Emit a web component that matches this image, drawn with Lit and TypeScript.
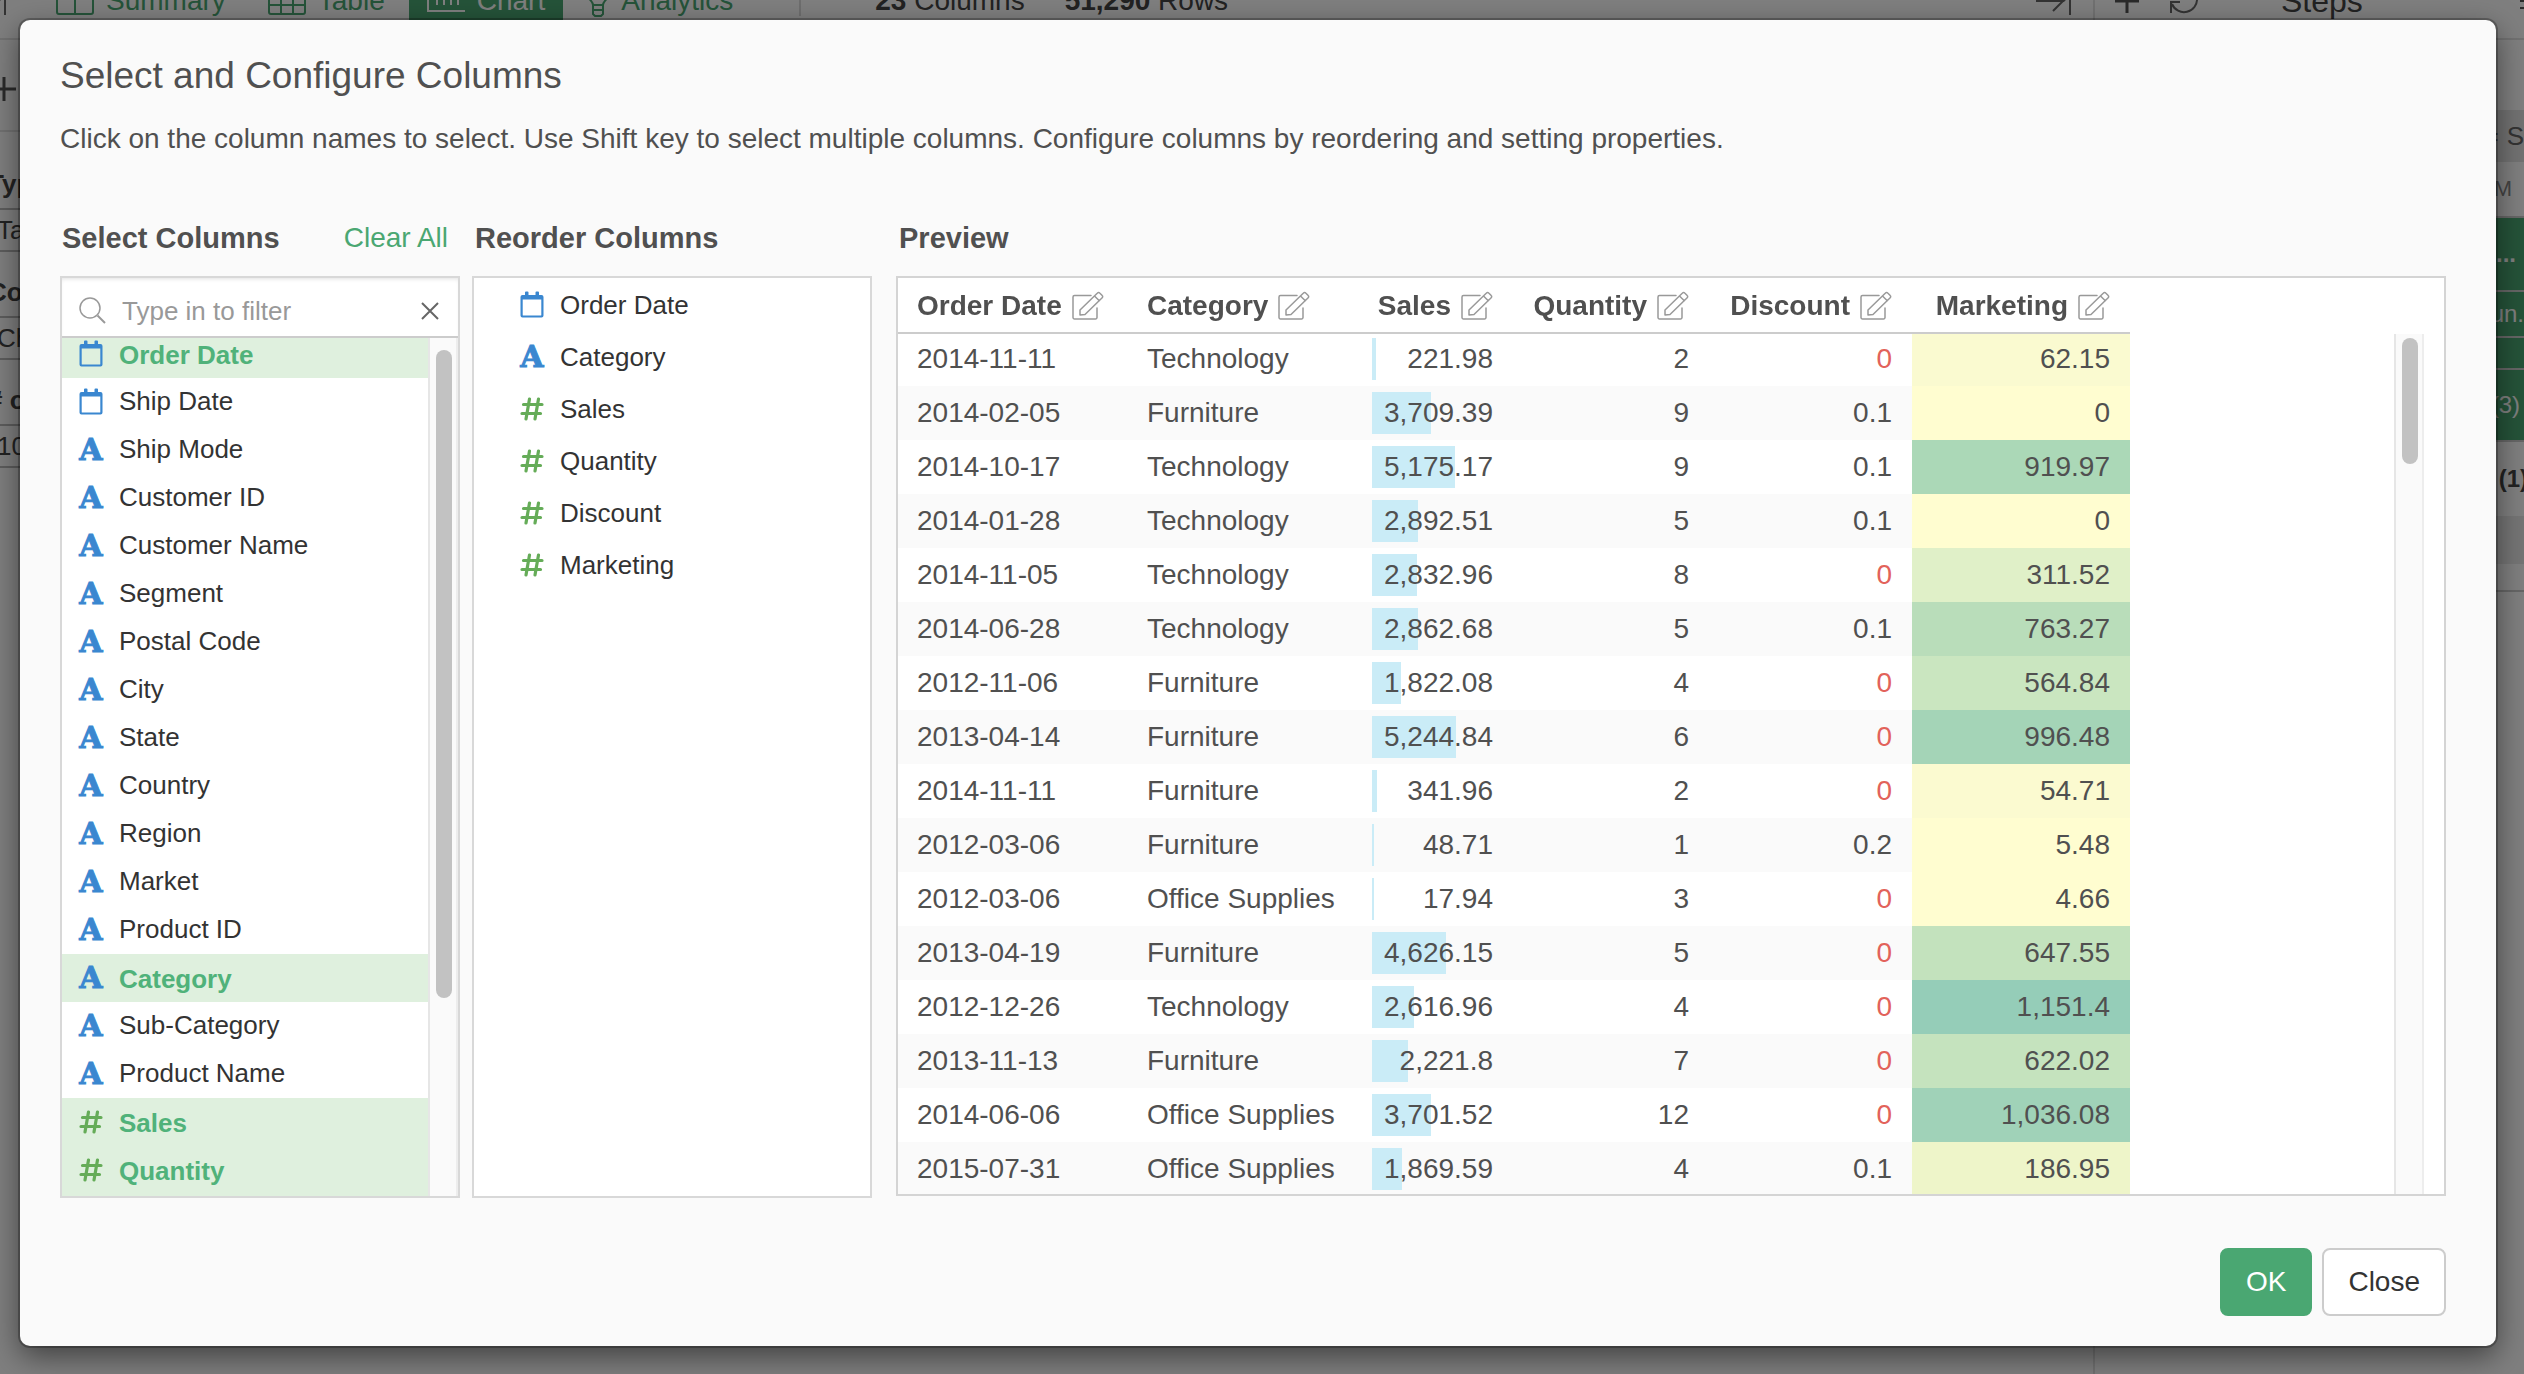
import { LitElement, html, css, nothing } from "lit";
import { customElement, property, state } from "lit/decorators.js";
import { classMap } from "lit/directives/class-map.js";
import { styleMap } from "lit/directives/style-map.js";

type Kind = "date" | "text" | "number";
interface Column {
  name: string;
  kind: Kind;
}

const COLUMNS: Column[] = [
  { name: "Order Date", kind: "date" },
  { name: "Ship Date", kind: "date" },
  { name: "Ship Mode", kind: "text" },
  { name: "Customer ID", kind: "text" },
  { name: "Customer Name", kind: "text" },
  { name: "Segment", kind: "text" },
  { name: "Postal Code", kind: "text" },
  { name: "City", kind: "text" },
  { name: "State", kind: "text" },
  { name: "Country", kind: "text" },
  { name: "Region", kind: "text" },
  { name: "Market", kind: "text" },
  { name: "Product ID", kind: "text" },
  { name: "Category", kind: "text" },
  { name: "Sub-Category", kind: "text" },
  { name: "Product Name", kind: "text" },
  { name: "Sales", kind: "number" },
  { name: "Quantity", kind: "number" },
  { name: "Discount", kind: "number" },
];

const REORDER: Column[] = [
  { name: "Order Date", kind: "date" },
  { name: "Category", kind: "text" },
  { name: "Sales", kind: "number" },
  { name: "Quantity", kind: "number" },
  { name: "Discount", kind: "number" },
  { name: "Marketing", kind: "number" },
];

type Row = [string, string, number, number, number, number];
const ROWS: Row[] = [
  ["2014-11-11", "Technology", 221.98, 2, 0, 62.15],
  ["2014-02-05", "Furniture", 3709.39, 9, 0.1, 0],
  ["2014-10-17", "Technology", 5175.17, 9, 0.1, 919.97],
  ["2014-01-28", "Technology", 2892.51, 5, 0.1, 0],
  ["2014-11-05", "Technology", 2832.96, 8, 0, 311.52],
  ["2014-06-28", "Technology", 2862.68, 5, 0.1, 763.27],
  ["2012-11-06", "Furniture", 1822.08, 4, 0, 564.84],
  ["2013-04-14", "Furniture", 5244.84, 6, 0, 996.48],
  ["2014-11-11", "Furniture", 341.96, 2, 0, 54.71],
  ["2012-03-06", "Furniture", 48.71, 1, 0.2, 5.48],
  ["2012-03-06", "Office Supplies", 17.94, 3, 0, 4.66],
  ["2013-04-19", "Furniture", 4626.15, 5, 0, 647.55],
  ["2012-12-26", "Technology", 2616.96, 4, 0, 1151.4],
  ["2013-11-13", "Furniture", 2221.8, 7, 0, 622.02],
  ["2014-06-06", "Office Supplies", 3701.52, 12, 0, 1036.08],
  ["2015-07-31", "Office Supplies", 1869.59, 4, 0.1, 186.95],
];

const SALES_SCALE = 7560;

/* Colour scale of the Marketing column, from pale yellow to teal. */
const SCALE: [number, number[]][] = [
  [0, [255, 253, 208]],
  [62, [250, 250, 208]],
  [187, [238, 245, 201]],
  [312, [224, 240, 200]],
  [565, [202, 230, 192]],
  [763, [185, 221, 186]],
  [920, [171, 216, 183]],
  [1152, [149, 205, 184]],
];

function heat(value: number): string {
  for (let i = 1; i < SCALE.length; i++) {
    const [lo, a] = SCALE[i - 1];
    const [hi, b] = SCALE[i];
    if (value <= hi) {
      const t = (value - lo) / (hi - lo);
      return `rgb(${a.map((c, k) => Math.round(c + (b[k] - c) * t)).join(",")})`;
    }
  }
  return `rgb(${SCALE[SCALE.length - 1][1].join(",")})`;
}

const fmt = (n: number) => n.toLocaleString("en-US", { maximumFractionDigits: 2 });

@customElement("type-icon")
export class TypeIcon extends LitElement {
  @property() kind: Kind = "text";

  static styles = css`
    :host {
      display: flex;
      align-items: center;
      justify-content: center;
      flex: none;
      width: 24px;
      height: 28px;
      color: #3a87d0;
    }
    svg {
      display: block;
    }
    .letter {
      font: bold 30px/28px "DejaVu Serif", serif;
      -webkit-text-stroke: 1px currentColor;
    }
    .hash {
      color: #65ac58;
    }
  `;

  render() {
    if (this.kind === "text") return html`<span class="letter" aria-hidden="true">A</span>`;
    if (this.kind === "number") {
      return html`<svg class="hash" width="24" height="24" viewBox="0 0 24 24" fill="none"
        stroke="currentColor" stroke-width="3.200" stroke-linecap="round" aria-hidden="true">
        <path d="M3.5 7.5H22M2 16.5H20.500M9.500 2L6 22M18.500 2L15 22" />
      </svg>`;
    }
    return html`<svg width="24" height="28" viewBox="0 0 24 28" aria-hidden="true">
      <path fill="currentColor" fill-rule="evenodd"
        d="M5 4V1.500a1 1 0 0 1 1-1h1.500a1 1 0 0 1 1 1V4h7V1.500a1 1 0 0 1 1-1H18a1 1 0 0 1 1 1V4h2.500A2 2 0 0 1 23.500 6v18.500a2 2 0 0 1-2 2h-19a2 2 0 0 1-2-2V6a2 2 0 0 1 2-2ZM2.700 8.500V24a.5.500 0 0 0 .5.500h17.600a.5.500 0 0 0 .5-.5V8.500Z" />
    </svg>`;
  }
}

const editIcon = html`<svg width="32" height="30" viewBox="0 0 32 30" fill="none" stroke="#999"
  stroke-width="1.500" stroke-linejoin="round" stroke-linecap="round" aria-hidden="true">
  <path d="M19 4.500H2.500A1.500 1.500 0 0 0 1 6V26.500A1.500 1.500 0 0 0 2.500 28H23.500A1.500 1.500 0 0 0 25 26.500V17" />
  <path d="M8 24V19L25.500 2a1.500 1.500 0 0 1 2.200 0L30.200 4.500a1.500 1.500 0 0 1 0 2.200L13 23.500ZM22.500 5L27.300 9.700" />
</svg>`;

@customElement("column-list")
export class ColumnList extends LitElement {
  @state() private selected = new Set(["Order Date", "Category", "Sales", "Quantity", "Discount"]);

  static styles = css`
    :host {
      display: flex;
      flex-direction: column;
      box-sizing: border-box;
      min-height: 0;
      border: 2px solid #d8d8d8;
      background: #fff;
      color: #333;
      font-size: 26px;
    }
    .filter {
      display: flex;
      align-items: center;
      flex: none;
      height: 60px;
      box-sizing: border-box;
      padding: 8px 18px 0 17px;
      border-bottom: 2px solid #ccc;
      box-shadow: inset 0 3px 4px -2px rgba(0, 0, 0, 0.12);
    }
    .filter svg {
      display: block;
      flex: none;
    }
    .filter label {
      display: flex;
    }
    .filter input {
      flex: 1;
      min-width: 0;
      height: 44px;
      padding: 0 0 0 15px;
      border: 0;
      outline: 0;
      background: none;
      font: inherit;
      color: #333;
    }
    .filter input::placeholder {
      color: #999;
      opacity: 1;
    }
    .filter button {
      padding: 0;
      border: 0;
      background: none;
    }
    .scroller {
      display: flex;
      flex: 1;
      min-height: 0;
      overflow: hidden;
    }
    ul {
      flex: 1;
      margin: -8px 0 0;
      padding: 0;
      list-style: none;
    }
    .item {
      display: flex;
      align-items: center;
      gap: 16px;
      width: 100%;
      height: 48px;
      padding: 0 17px;
      border: 0;
      background: none;
      font: inherit;
      color: inherit;
      text-align: left;
    }
    .item span {
      padding-bottom: 2px;
    }
    .item.selected {
      background: #dff0de;
      color: #50b27a;
      font-weight: bold;
    }
    .item.selected span {
      padding: 2px 0 0;
    }
    .track {
      flex: none;
      box-sizing: border-box;
      width: 30px;
      padding: 12px 4px 0 6px;
      border-left: 2px solid #e6e6e6;
      border-right: 2px solid #ededed;
      background: #fafafa;
    }
    .thumb {
      width: 16px;
      height: 648px;
      border-radius: 8px;
      background: #c2c2c2;
    }
  `;

  private toggle(name: string) {
    const next = new Set(this.selected);
    next.has(name) ? next.delete(name) : next.add(name);
    this.selected = next;
  }

  render() {
    return html`
      <div class="filter">
        <label for="filter" aria-label="Filter columns">
          <svg width="28" height="28" viewBox="0 0 28 28" fill="none" stroke="#999" stroke-width="1.500">
            <circle cx="11" cy="11" r="10" />
            <path stroke-width="2" d="M18.500 18.500L26 26" />
          </svg>
        </label>
        <input id="filter" type="text" placeholder="Type in to filter" />
        <button type="button" aria-label="Clear filter">
          <svg width="20" height="20" viewBox="0 0 20 20" fill="none" stroke="#666" stroke-width="2">
            <path d="M2 2L18 18M18 2L2 18" />
          </svg>
        </button>
      </div>
      <div class="scroller">
        <ul>
          ${COLUMNS.map((c) => {
            const on = this.selected.has(c.name);
            return html`<li>
              <button type="button" class=${classMap({ item: true, selected: on })}
                aria-pressed=${on} @click=${() => this.toggle(c.name)}>
                <type-icon .kind=${c.kind}></type-icon><span>${c.name}</span>
              </button>
            </li>`;
          })}
        </ul>
        <div class="track"><div class="thumb"></div></div>
      </div>
    `;
  }
}

@customElement("reorder-list")
export class ReorderList extends LitElement {
  static styles = css`
    :host {
      display: block;
      box-sizing: border-box;
      border: 2px solid #d8d8d8;
      background: #fff;
      color: #333;
      font-size: 26px;
    }
    ul {
      margin: 0;
      padding: 1px 0;
      list-style: none;
    }
    li {
      display: flex;
      align-items: center;
      gap: 16px;
      height: 52px;
      padding-left: 46px;
    }
  `;

  render() {
    return html`<ul>
      ${REORDER.map((c) => html`<li><type-icon .kind=${c.kind}></type-icon>${c.name}</li>`)}
    </ul>`;
  }
}

@customElement("data-preview")
export class DataPreview extends LitElement {
  static styles = css`
    :host {
      display: flex;
      box-sizing: border-box;
      min-height: 0;
      border: 2px solid #d4d4d4;
      background: #fff;
      color: #505050;
      font-size: 28px;
    }
    .view {
      flex: 1;
      min-width: 0;
      overflow: hidden;
    }
    table {
      table-layout: fixed;
      border-collapse: separate;
      border-spacing: 0;
      width: 1232px;
    }
    .w-date { width: 230px; }
    .w-category { width: 229px; }
    .w-sales { width: 156px; }
    .w-quantity { width: 196px; }
    .w-discount { width: 203px; }
    .w-marketing { width: 218px; }
    th {
      position: sticky;
      top: 0;
      z-index: 1;
      box-sizing: border-box;
      height: 54px;
      padding: 2px 20px 0 19px;
      background: #fff;
      box-shadow: 0 2px 0 #ccc;
    }
    .head {
      display: flex;
      align-items: center;
      gap: 10px;
      white-space: nowrap;
    }
    .num .head {
      justify-content: flex-end;
    }
    .head button {
      padding: 0;
      border: 0;
      background: none;
    }
    .head svg {
      display: block;
    }
    td {
      box-sizing: border-box;
      height: 54px;
      padding: 0 20px 0 19px;
      white-space: nowrap;
    }
    tbody tr:nth-child(even) {
      background: #fafafa;
    }
    .num {
      text-align: right;
    }
    .zero {
      color: #e2625a;
    }
    .sales {
      padding-left: 15px;
    }
    .bar-cell {
      display: grid;
      align-items: center;
    }
    .bar-cell > * {
      grid-area: 1 / 1;
    }
    .bar {
      min-width: 2px;
      height: 42px;
      background: #caecf7;
    }
    .track {
      flex: none;
      box-sizing: border-box;
      width: 30px;
      margin: 56px 20px 0 0;
      padding: 4px 6px 0 6px;
      border-left: 2px solid #e6e6e6;
      border-right: 2px solid #ededed;
      background: #fafafa;
    }
    .thumb {
      width: 16px;
      height: 126px;
      border-radius: 8px;
      background: #c2c2c2;
    }
  `;

  render() {
    return html`
      <div class="view">
        <table>
          <colgroup>
            <col class="w-date" /><col class="w-category" /><col class="w-sales" />
            <col class="w-quantity" /><col class="w-discount" /><col class="w-marketing" />
          </colgroup>
          <thead>
            <tr>
              ${REORDER.map(
                (c) => html`<th scope="col" class=${c.kind === "number" ? "num" : nothing}>
                  <div class="head">
                    <span>${c.name}</span>
                    <button type="button" aria-label="Edit ${c.name}">${editIcon}</button>
                  </div>
                </th>`
              )}
            </tr>
          </thead>
          <tbody>
            ${ROWS.map(
              ([date, category, sales, quantity, discount, marketing]) => html`<tr>
                <td>${date}</td>
                <td>${category}</td>
                <td class="num sales">
                  <div class="bar-cell">
                    <div class="bar" style=${styleMap({ width: `${(sales / SALES_SCALE) * 100}%` })}></div>
                    <span>${fmt(sales)}</span>
                  </div>
                </td>
                <td class="num">${quantity}</td>
                <td class=${classMap({ num: true, zero: discount === 0 })}>${discount}</td>
                <td class="num" style=${styleMap({ background: heat(marketing) })}>${fmt(marketing)}</td>
              </tr>`
            )}
          </tbody>
        </table>
      </div>
      <div class="track"><div class="thumb"></div></div>
    `;
  }
}

const plusIcon = html`<svg width="24" height="24" viewBox="0 0 24 24" fill="none" stroke="#555"
  stroke-width="3" aria-hidden="true"><path d="M12 0V24M0 12H24" /></svg>`;
const collapseIcon = html`<svg width="36" height="28" viewBox="0 0 36 28" fill="none" stroke="#666"
  stroke-width="2" aria-hidden="true">
  <path d="M34 0V28M0 14H28" /><path d="M17 24L29 12M17 2L29 14" />
</svg>`;

@customElement("work-space")
export class WorkSpace extends LitElement {
  static styles = css`
    :host {
      display: flex;
      height: 100%;
      overflow: hidden;
      background: #fff;
      color: #444;
      font-size: 28px;
    }
    svg {
      display: block;
      flex: none;
    }
    .main {
      flex: 1;
      min-width: 0;
    }
    .bar {
      display: flex;
      align-items: center;
      box-sizing: border-box;
      height: 80px;
      margin-top: -40px;
      padding: 4px 0 0;
      border-bottom: 2px solid #e2e2e2;
      white-space: nowrap;
    }
    .main .bar {
      padding-right: 21px;
    }
    .main .bar > svg:first-child {
      margin-left: -29px;
    }
    .tabs {
      display: flex;
      gap: 6px;
      height: 100%;
      margin-left: 31px;
    }
    .tab {
      display: flex;
      align-items: center;
      gap: 12px;
      padding: 0 18px;
      border: 0;
      background: none;
      font: inherit;
      color: #4aa772;
    }
    .tab.active {
      background: #4aa772;
      color: #fff;
    }
    .rule {
      width: 2px;
      height: 30px;
      margin: 0 74px 0 48px;
      background: #ddd;
    }
    .stats {
      display: flex;
      flex: 1;
      gap: 40px;
    }
    .add {
      display: flex;
      align-items: center;
      box-sizing: border-box;
      height: 92px;
      margin-left: -8px;
      padding-top: 8px;
      border-bottom: 2px solid #e2e2e2;
    }
    .fields {
      display: grid;
      gap: 18px;
      width: 420px;
      margin-left: -12px;
      padding-top: 30px;
      font-size: 26px;
    }
    .field {
      display: grid;
      gap: 6px;
    }
    .field label {
      height: 40px;
      font-weight: bold;
      line-height: 44px;
    }
    .field select,
    .field input {
      appearance: none;
      box-sizing: border-box;
      width: 100%;
      height: 44px;
      padding: 0 0 0 7px;
      border: 2px solid #bbb;
      border-radius: 0;
      background: #fff;
      font: inherit;
      color: #444;
    }
    .side {
      flex: none;
      box-sizing: border-box;
      width: 431px;
      border-left: 2px solid #e2e2e2;
      overflow: hidden;
      font-size: 24px;
    }
    .side .bar {
      gap: 30px;
      padding-left: 20px;
    }
    .steps {
      flex: 1;
      padding-left: 52px;
      font-size: 32px;
    }
    .line {
      display: flex;
      align-items: center;
      justify-content: flex-end;
      box-sizing: border-box;
    }
    .search {
      gap: 8px;
      height: 52px;
      margin-top: 70px;
      background: #e4e4e4;
      font-size: 26px;
      color: #666;
    }
    .time {
      height: 56px;
      padding-right: 12px;
      border-bottom: 2px solid #ccc;
      font-size: 22px;
      color: #888;
    }
    .green {
      border-bottom: 2px solid #ccc;
      background: #4aa772;
      color: #fff;
    }
    .tall { height: 74px; padding-right: 8px; font-weight: bold; }
    .mid { height: 46px; }
    .low { height: 32px; }
    .open { height: 72px; padding-right: 4px; }
    .count {
      height: 74px;
      margin-right: -4px;
      font-weight: bold;
    }
    .band {
      height: 48px;
      background: #ebebeb;
    }
    .end {
      height: 26px;
      border-bottom: 2px solid #ccc;
    }
  `;

  render() {
    return html`
      <div class="main">
        <div class="bar">
          ${collapseIcon}
          <div class="tabs">
            <button class="tab" type="button">
              <svg width="38" height="28" viewBox="0 0 38 28" fill="none" stroke="currentColor" stroke-width="2">
                <rect x="1" y="1" width="36" height="26" rx="2" /><path d="M19 1V27M1 9H37" />
              </svg>Summary
            </button>
            <button class="tab" type="button">
              <svg width="38" height="28" viewBox="0 0 38 28" fill="none" stroke="currentColor" stroke-width="2">
                <rect x="1" y="1" width="36" height="26" rx="2" /><path d="M13 1V27M25 1V27M1 9H37M1 18H37" />
              </svg>Table
            </button>
            <button class="tab active" type="button">
              <svg width="38" height="24" viewBox="0 0 38 24" fill="none" stroke="currentColor" stroke-width="2">
                <path d="M1 0V22H38M10 6V16M17 1V16M24 4V16M31 0V16" />
              </svg>Chart
            </button>
            <button class="tab" type="button">
              <svg width="22" height="32" viewBox="0 0 22 32" fill="none" stroke="currentColor" stroke-width="2">
                <path d="M6 20C6 16 1 15 1 9a10 9 0 0 1 20 0C21 15 16 16 16 20ZM6 25H16M6 20V29L8 31H14L16 29V20" />
              </svg>Analytics
            </button>
          </div>
          <div class="rule"></div>
          <div class="stats">
            <span><b>23</b> Columns</span>
            <span><b>51,290</b> Rows</span>
          </div>
          ${collapseIcon}
        </div>
        <div class="add">${plusIcon}</div>
        <form class="fields">
          <div class="field">
            <label for="type">Type</label>
            <select id="type"><option>Table</option></select>
          </div>
          <div class="field">
            <label for="cols">Columns</label>
            <select id="cols"><option>Choose</option></select>
          </div>
          <div class="field">
            <label for="count"># of Rows</label>
            <input id="count" type="text" value="100" />
          </div>
        </form>
      </div>
      <aside class="side">
        <div class="bar">
          ${plusIcon}
          <svg width="30" height="28" viewBox="0 0 30 28" fill="none" stroke="#666" stroke-width="2">
            <path d="M28 11A13 13 0 0 1 3 17M2 26V15H11M1 13A13 13 0 0 1 26 7" />
          </svg>
          <span class="steps">Steps</span>
          <svg width="4" height="20" viewBox="0 0 4 20" stroke="#555" stroke-width="2"><path d="M0 10H4M0 17H4" /></svg>
        </div>
        <div class="line search"><span>=</span><span>S</span></div>
        <div class="line time">M</div>
        <div class="line green tall">...</div>
        <div class="line green mid">un.</div>
        <div class="line green low"></div>
        <div class="line green open">(3)</div>
        <div class="line count">(1)</div>
        <div class="band"></div>
        <div class="end"></div>
      </aside>
    `;
  }
}

@customElement("app-root")
export class AppRoot extends LitElement {
  static styles = css`
    :host {
      display: block;
      position: relative;
      height: 100vh;
      overflow: hidden;
      font-family: "Liberation Sans", Arial, sans-serif;
    }
    .backdrop {
      position: absolute;
      inset: 0;
      z-index: 1;
      display: flex;
      box-sizing: border-box;
      padding: 20px 28px 28px 20px;
      background: rgba(0, 0, 0, 0.5);
    }
    .dialog {
      display: flex;
      flex: 1;
      flex-direction: column;
      box-sizing: border-box;
      min-width: 0;
      padding: 34px 50px 30px 40px;
      border-radius: 10px;
      background: #fafafa;
      box-shadow: 0 0 0 2px rgba(0, 0, 0, 0.25), 0 10px 30px rgba(0, 0, 0, 0.5);
      color: #505050;
    }
    h1 {
      margin: 0;
      font-size: 37px;
      font-weight: normal;
      line-height: 44px;
    }
    p {
      margin: 21px 0 59px;
      font-size: 28px;
      line-height: 40px;
    }
    .columns {
      display: grid;
      grid-template-columns: 400px 400px minmax(0, 1fr);
      grid-template-rows: 40px minmax(0, 1fr);
      gap: 18px 12px;
      flex: 1;
      min-height: 0;
    }
    .title {
      display: flex;
      justify-content: space-between;
      padding: 0 12px 0 2px;
      font-size: 28px;
      line-height: 40px;
    }
    h2 {
      margin: 0;
      font-size: 29px;
    }
    .title.indent {
      padding-left: 3px;
    }
    .title.wide,
    data-preview {
      margin-left: 12px;
    }
    data-preview {
      margin-bottom: 2px;
    }
    .link {
      padding: 0;
      border: 0;
      background: none;
      font: inherit;
      color: #4aa772;
    }
    footer {
      display: flex;
      justify-content: flex-end;
      gap: 10px;
      margin-top: 50px;
    }
    .btn {
      height: 68px;
      padding: 0 24px;
      border: 2px solid #ccc;
      border-radius: 8px;
      background: #fff;
      font: inherit;
      font-size: 28px;
      color: #333;
    }
    .btn.primary {
      border-color: #4aa772;
      background: #4aa772;
      color: #fff;
    }
  `;

  render() {
    return html`
      <work-space inert></work-space>
      <div class="backdrop">
        <section class="dialog" role="dialog" aria-modal="true" aria-labelledby="heading">
          <h1 id="heading">Select and Configure Columns</h1>
          <p>
            Click on the column names to select. Use Shift key to select multiple columns. Configure
            columns by reordering and setting properties.
          </p>
          <div class="columns">
            <div class="title">
              <h2>Select Columns</h2>
              <button class="link" type="button">Clear All</button>
            </div>
            <div class="title indent"><h2>Reorder Columns</h2></div>
            <div class="title indent wide"><h2>Preview</h2></div>
            <column-list></column-list>
            <reorder-list></reorder-list>
            <data-preview></data-preview>
          </div>
          <footer>
            <button class="btn primary" type="button">OK</button>
            <button class="btn" type="button">Close</button>
          </footer>
        </section>
      </div>
    `;
  }
}
